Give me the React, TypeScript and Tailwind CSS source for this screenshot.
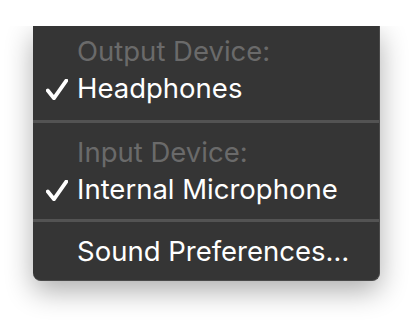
import React from "react";

function Check() {
  return (
    <svg width="22" height="21" viewBox="0 0 22 21" className="block">
      <path
        d="M1.8 11.5 L8 19.2 L20.3 1.6"
        fill="none"
        stroke="#ffffff"
        strokeWidth="3.8"
        strokeLinecap="round"
        strokeLinejoin="round"
      />
    </svg>
  );
}

function Row({
  label,
  kind,
}: {
  label: string;
  kind: "header" | "checked" | "plain";
}) {
  return (
    <div className="flex h-[37px] items-center leading-[37px]">
      <div className="flex w-[44px] shrink-0 justify-end pr-[9px] pt-[1px]">
        {kind === "checked" ? <Check /> : null}
      </div>
      <span
        className={
          kind === "header" ? "text-[#6a6a6a]" : "text-white"
        }
      >
        {label}
      </span>
    </div>
  );
}

export default function App() {
  return (
    <div
      className="h-[322px] w-[414px] bg-white pt-[26px]"
      style={{ fontFamily: 'Inter, "Noto Sans", "Liberation Sans", sans-serif' }}
    >
      <div className="overflow-hidden pb-[43px] pl-[33px] pr-[34px]">
        <div className="w-[347px] rounded-b-[8px] border-b border-r border-[#4a4a4a] bg-[#353535] pb-[10px] pt-[7px] text-[27.5px] shadow-[0_10px_28px_rgba(0,0,0,0.32)]">
          <Row label="Output Device:" kind="header" />
          <Row label="Headphones" kind="checked" />
          <div className="mb-[11px] mt-[13px] h-[3px] bg-[#535353]" />
          <Row label="Input Device:" kind="header" />
          <Row label="Internal Microphone" kind="checked" />
          <div className="my-[11px] h-[3px] bg-[#535353]" />
          <Row label="Sound Preferences…" kind="plain" />
        </div>
      </div>
    </div>
  );
}
